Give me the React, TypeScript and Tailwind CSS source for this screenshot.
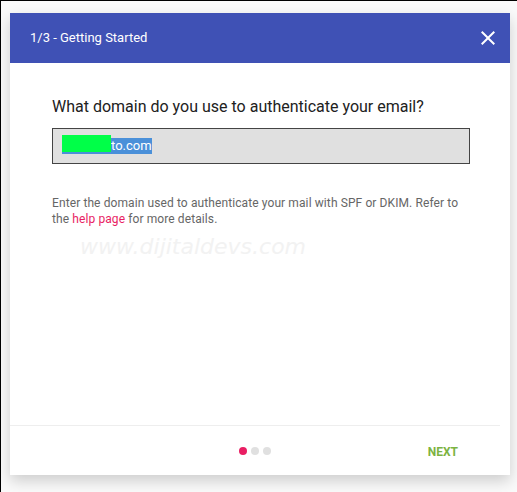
import React from "react";

const CloseIcon: React.FC = () => (
  <svg width="24" height="24" viewBox="0 0 24 24" fill="white">
    <path d="M19 6.41L17.59 5 12 10.59 6.41 5 5 6.41 10.59 12 5 17.59 6.41 19 12 13.41 17.59 19 19 17.59 13.41 12z" />
  </svg>
);

const App: React.FC = () => {
  return (
    <div
      className="w-[517px] h-[492px] bg-[#fafafa] border-t border-l border-black overflow-hidden"
      style={{ fontFamily: "Roboto, 'Liberation Sans', sans-serif" }}
    >
      <div className="ml-[9px] mt-[12px] w-[500px] h-[462px] bg-white flex flex-col shadow-[0_6px_14px_rgba(0,0,0,0.18)]">
        {/* header */}
        <div className="h-[50px] bg-[#3f51b5] flex items-center justify-between pl-[20px] pr-[10px]">
          <span className="text-[13px] text-white">1/3 - Getting Started</span>
          <CloseIcon />
        </div>

        {/* body */}
        <div className="flex-1 pl-[42px] pt-[32px] flex flex-col">
          <h2 className="text-[16px] leading-[24px] text-[#212121]">
            What domain do you use to authenticate your email?
          </h2>
          <div className="relative mt-[9px] w-[418px] h-[36px] bg-[#e0e0e0] border border-[#444] flex items-center pl-[9px]">
            <span className="bg-[#4a90d9] text-white text-[13px] leading-[16px] flex items-center">
              <span className="inline-block w-[49px]" />
              to.com
            </span>
            <div className="absolute left-[9px] top-[6px] w-[49px] h-[17px] bg-[#00ff48]" />
          </div>
          <p className="mt-[31px] w-[418px] text-[12px] leading-[16px] tracking-[0.1px] text-[#666]">
            Enter the domain used to authenticate your mail with SPF or DKIM. Refer to the{" "}
            <a className="text-[#e91e63]">help page</a> for more details.
          </p>
          <div
            className="ml-[28px] mt-[8px] text-[22px] leading-[24px] italic font-extralight text-[#f2f2f2]"
            style={{ fontFamily: "'DejaVu Sans', sans-serif" }}
          >
            www.dijitaldevs.com
          </div>
        </div>

        {/* footer */}
        <div className="w-[490px] h-[50px] border-t border-[#eeeeee] grid grid-cols-[1fr_auto_1fr] items-center">
          <div />
          <div className="flex gap-[4px] pt-[1px]">
            <span className="w-[8px] h-[8px] rounded-full bg-[#e91e63]" />
            <span className="w-[8px] h-[8px] rounded-full bg-[#e0e0e0]" />
            <span className="w-[8px] h-[8px] rounded-full bg-[#e0e0e0]" />
          </div>
          <div className="flex justify-end pr-[42px]">
            <span className="text-[12px] font-bold text-[#7cb342] pt-[2px]">NEXT</span>
          </div>
        </div>
      </div>
    </div>
  );
};

export default App;
